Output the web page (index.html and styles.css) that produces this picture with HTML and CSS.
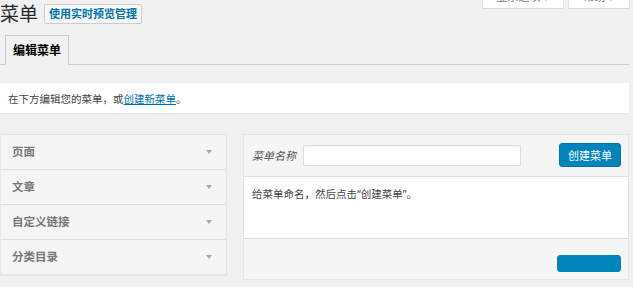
FILE: index.html
```html
<!DOCTYPE html>
<html lang="zh-CN">
<head>
    <meta charset="UTF-8">
    <meta name="viewport" content="width=device-width, initial-scale=1.0">
    <title>菜单</title>
    <link rel="stylesheet" href="styles.css">
</head>
<body>
    <div class="wrap">
        <header class="page-header">
            <h1>菜单</h1>
            <a href="#" class="page-title-action">使用实时预览管理</a>
            <div class="screen-meta-links">
                <button class="screen-meta-toggle options">显示选项 ▾</button>
                <button class="screen-meta-toggle help">帮助 ▾</button>
            </div>
        </header>

        <nav class="nav-tab-wrapper">
            <a href="#" class="nav-tab active">编辑菜单</a>
        </nav>

        <div class="manage-menus">
            在下方编辑您的菜单，或<a href="#">创建新菜单</a>。
        </div>

        <div class="nav-menus-frame">
            <div class="menu-settings-column">
                <ul class="accordion">
                    <li class="accordion-section"><h3>页面<span class="arrow"></span></h3></li>
                    <li class="accordion-section"><h3>文章<span class="arrow"></span></h3></li>
                    <li class="accordion-section"><h3>自定义链接<span class="arrow"></span></h3></li>
                    <li class="accordion-section"><h3>分类目录<span class="arrow"></span></h3></li>
                </ul>
            </div>

            <div class="menu-management">
                <form class="menu-edit">
                    <div class="menu-header">
                        <label for="menu-name" class="menu-name-label">菜单名称</label>
                        <input type="text" id="menu-name" class="menu-name">
                        <button type="button" class="button-primary">创建菜单</button>
                    </div>
                    <div class="menu-body">
                        <p>给菜单命名，然后点击“创建菜单”。</p>
                    </div>
                    <div class="menu-footer">
                        <span class="button-primary footer-button"></span>
                    </div>
                </form>
            </div>
        </div>
    </div>
</body>
</html>
```

FILE: styles.css
```css
body {
    margin: 0;
    background: #f1f1f1;
    font-family: "Noto Sans", "Noto Sans CJK SC", sans-serif;
    font-size: 11px;
    color: #444;
}

.wrap {
    padding-right: 4px;
}

/* heading row */
.page-header {
    display: flex;
    align-items: flex-start;
    height: 28px;
}

h1 {
    margin: 0;
    font-size: 19px;
    font-weight: 400;
    line-height: 28px;
    color: #23282d;
}

.page-title-action {
    margin: 4px 0 0 6px;
    padding: 0 4px;
    line-height: 18px;
    border: 1px solid #ccc;
    border-radius: 2px;
    background: #f7f7f7;
    color: #0073aa;
    font-weight: 600;
    text-decoration: none;
}

.screen-meta-links {
    margin-left: auto;
    margin-top: -16px;
    display: flex;
    gap: 6px;
}

.screen-meta-toggle {
    height: 24px;
    padding: 0;
    border: none;
    background: #fff;
    box-shadow: 0 0 0 1px rgba(0, 0, 0, 0.04), 0 1px 1px rgba(0, 0, 0, 0.06);
    font: inherit;
    color: #72777c;
}

.screen-meta-toggle.options { width: 80px; }
.screen-meta-toggle.help { width: 60px; }

/* tabs */
.nav-tab-wrapper {
    display: flex;
    margin-top: 7px;
    padding-left: 5px;
    border-bottom: 1px solid #ccc;
}

.nav-tab {
    margin-bottom: -1px;
    padding: 0 7px;
    line-height: 29px;
    border: 1px solid #ccc;
    border-bottom: none;
    background: #f1f1f1;
    color: #000;
    font-size: 12px;
    font-weight: 700;
    text-decoration: none;
}

/* notice */
.manage-menus {
    margin-top: 18px;
    padding: 5px 8px 3px;
    line-height: 22px;
    font-size: 10.5px;
    background: #fff;
    box-shadow: 0 1px 1px rgba(0, 0, 0, 0.04);
}

.manage-menus a {
    color: #0073aa;
}

/* columns */
.nav-menus-frame {
    display: flex;
    align-items: flex-start;
    gap: 16px;
    margin-top: 21px;
}

.menu-settings-column {
    width: 227px;
}

.accordion {
    list-style: none;
    margin: 0;
    padding: 0;
    border: 1px solid #e5e5e5;
    background: #f5f5f5;
    box-shadow: 0 1px 1px rgba(0, 0, 0, 0.04);
}

.accordion-section {
    border-bottom: 1px solid #dfdfdf;
}

.accordion-section:last-child {
    border-bottom: none;
}

.accordion-section h3 {
    display: flex;
    align-items: center;
    justify-content: space-between;
    margin: 0;
    padding: 0 14px 0 11px;
    line-height: 34px;
    font-size: 11.5px;
    font-weight: 600;
    color: #777;
}

.arrow {
    width: 0;
    height: 0;
    border-left: 3px solid transparent;
    border-right: 3px solid transparent;
    border-top: 4px solid #a8a8a8;
}

.menu-management {
    flex: 1;
}

.menu-edit {
    border: 1px solid #e5e5e5;
    box-shadow: 0 1px 1px rgba(0, 0, 0, 0.04);
}

.menu-header {
    display: flex;
    align-items: center;
    padding: 8px 7px 9px 8px;
    background: #f5f5f5;
    border-bottom: 1px solid #dfdfdf;
}

.menu-name-label {
    font-style: italic;
    color: #555;
    margin-right: 7px;
}

.menu-name {
    box-sizing: border-box;
    width: 218px;
    height: 21px;
    margin: 0;
    border: 1px solid #ddd;
    background: #fff;
    box-shadow: inset 0 1px 2px rgba(0, 0, 0, 0.04);
}

.button-primary {
    box-sizing: border-box;
    height: 24px;
    margin-left: auto;
    padding: 0 8px;
    border: 1px solid #0073aa;
    border-radius: 3px;
    background: #0085ba;
    color: #fff;
    font: inherit;
}

.menu-body {
    padding: 9px 8px 36px;
    background: #fff;
    font-size: 10.5px;
}

.menu-body p {
    margin: 0;
    line-height: 16px;
}

.menu-footer {
    display: flex;
    padding: 16px 7px 7px;
    background: #f5f5f5;
    border-top: 1px solid #dfdfdf;
}

.footer-button {
    display: block;
    width: 64px;
    height: 17px;
    border-color: #0085ba;
}
```
